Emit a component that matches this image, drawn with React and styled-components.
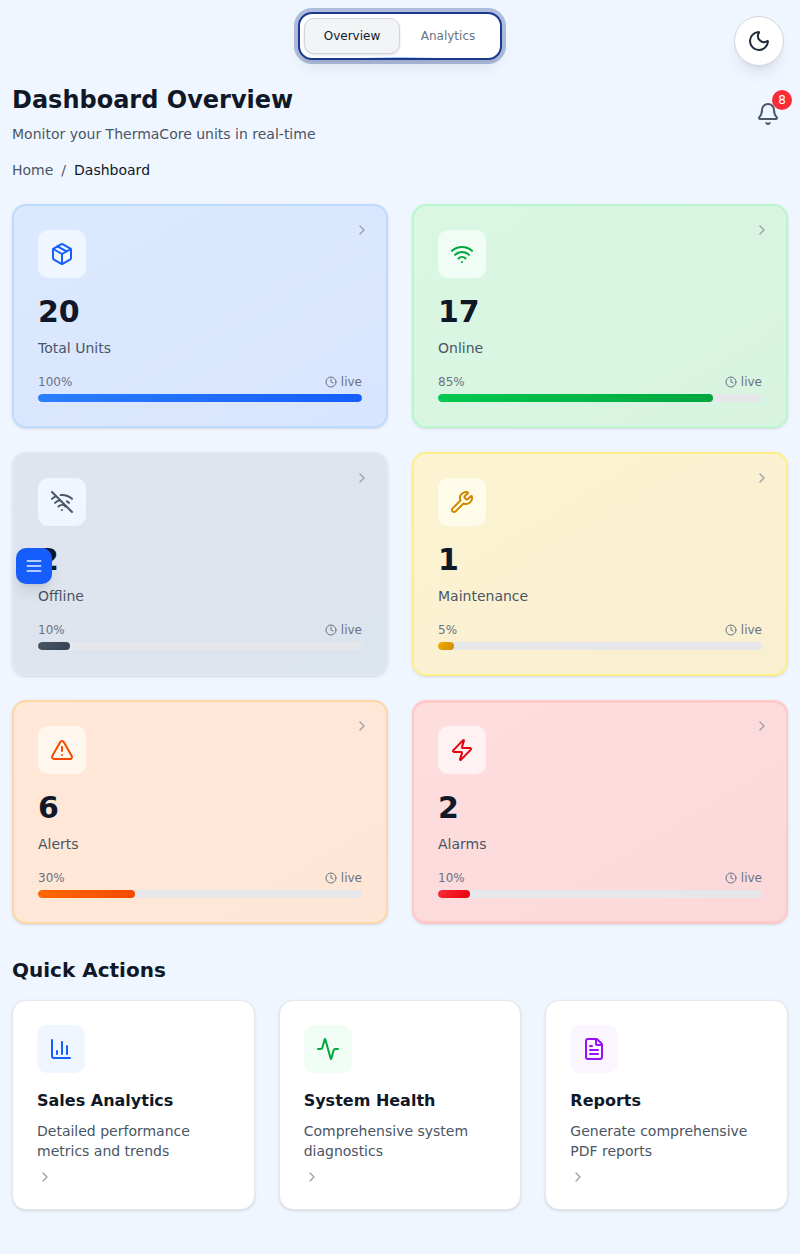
import React from "react";
import styled, { createGlobalStyle } from "styled-components";
import {
  Activity,
  Bell,
  ChartColumn,
  ChevronRight,
  Clock,
  FileText,
  Moon,
  Package,
  TriangleAlert,
  Wifi,
  WifiOff,
  Wrench,
  Zap,
} from "lucide-react";

const GlobalStyle = createGlobalStyle`
  *, *::before, *::after { box-sizing: border-box; }
  body {
    margin: 0;
    background: #eff6ff;
    color: #101828;
    font-family: "DejaVu Sans", sans-serif;
    font-size: 14px;
    line-height: 20px;
  }
  h1, h2, h3, p { margin: 0; }
  svg { display: block; flex: none; }
  button { font: inherit; padding: 0; border: 0; background: none; cursor: pointer; }
`;

const Page = styled.div`
  position: relative;
  min-height: 1254px;
  display: flex;
  flex-direction: column;
`;

const TopBar = styled.div`
  display: flex;
  justify-content: center;
  height: 84px;
  padding-top: 12px;
`;

const TabList = styled.div`
  position: relative;
  display: flex;
  height: 48px;
  padding: 4px;
  border: 2px solid #1c398e;
  border-radius: 14px;
  background: #fff;
  box-shadow: 0 0 0 4px rgba(28, 57, 142, 0.3), 0 10px 15px -3px rgba(0, 0, 0, 0.08),
    0 4px 6px -4px rgba(0, 0, 0, 0.08);

  &::after {
    content: "";
    position: absolute;
    bottom: 0;
    left: 30%;
    right: 30%;
    height: 1px;
    background: linear-gradient(to right, transparent, rgba(43, 127, 255, 0.5), transparent);
  }
`;

const Tab = styled.button`
  width: 96px;
  height: 36px;
  border: 1px solid ${(p) => (p.$active ? "#d1d5dc" : "transparent")};
  border-radius: 10px;
  background: ${(p) => (p.$active ? "#f3f4f6" : "transparent")};
  box-shadow: ${(p) =>
    p.$active ? "0 1px 3px rgba(0, 0, 0, 0.1), 0 1px 2px -1px rgba(0, 0, 0, 0.1)" : "none"};
  color: ${(p) => (p.$active ? "#101828" : "#6a7282")};
  font-size: 12px;
  line-height: 16px;
`;

const ThemeButton = styled.button`
  position: absolute;
  top: 16px;
  right: 16px;
  display: grid;
  place-items: center;
  width: 50px;
  height: 50px;
  border: 1px solid #d1d5dc;
  border-radius: 50%;
  background: #fff;
  color: #1e2939;
  box-shadow: 0 10px 15px -3px rgba(0, 0, 0, 0.08), 0 4px 6px -4px rgba(0, 0, 0, 0.08);
`;

const MenuButton = styled.button`
  position: absolute;
  top: 548px;
  left: 16px;
  display: grid;
  place-items: center;
  width: 36px;
  height: 36px;
  border-radius: 10px;
  background: #155dfc;
  color: rgba(255, 255, 255, 0.9);
  box-shadow: 0 10px 15px -3px rgba(0, 0, 0, 0.1), 0 4px 6px -4px rgba(0, 0, 0, 0.1);
`;

const Content = styled.main`
  display: flex;
  flex-direction: column;
  padding: 0 12px 44px;
`;

const Header = styled.header`
  display: flex;
  align-items: center;
  justify-content: space-between;
`;

const Title = styled.h1`
  margin-bottom: 8px;
  font-size: 24px;
  line-height: 32px;
  font-weight: 700;
`;

const Subtitle = styled.p`
  color: #4a5565;
`;

const BellButton = styled.button`
  position: relative;
  display: grid;
  place-items: center;
  width: 40px;
  height: 40px;
  color: #4a5565;
`;

const Badge = styled.span`
  position: absolute;
  top: -4px;
  right: -4px;
  display: grid;
  place-items: center;
  width: 20px;
  height: 20px;
  border-radius: 50%;
  background: #fb2c36;
  color: #fff;
  font-size: 12px;
  line-height: 16px;
`;

const Breadcrumb = styled.nav`
  display: flex;
  gap: 8px;
  margin: 16px 0 24px;
  color: #4a5565;
`;

const Current = styled.span`
  color: #101828;
`;

const StatGrid = styled.section`
  display: grid;
  grid-template-columns: repeat(2, 1fr);
  gap: 24px;
`;

const StatCard = styled.article`
  position: relative;
  height: 224px;
  padding: 24px;
  border: 2px solid ${(p) => p.$border};
  border-radius: 14px;
  background: linear-gradient(to bottom right, ${(p) => p.$from}, ${(p) => p.$to}) border-box;
  box-shadow: 0 1px 3px rgba(0, 0, 0, 0.1), 0 1px 2px -1px rgba(0, 0, 0, 0.1)
    ${(p) => (p.$urgent ? `, inset 0 1px ${p.$border}, inset 0 -1px ${p.$border}` : "")};
`;

const CardArrow = styled.span`
  position: absolute;
  top: 16px;
  right: 16px;
  color: #99a1af;
`;

const IconTile = styled.div`
  display: grid;
  place-items: center;
  width: 48px;
  height: 48px;
  margin-bottom: 16px;
  border-radius: 10px;
  background: ${(p) => p.$bg};
  color: ${(p) => p.$color};
`;

const Value = styled.p`
  margin-bottom: 8px;
  font-size: 30px;
  line-height: 36px;
  font-weight: 700;
`;

const Label = styled.p`
  margin-bottom: 16px;
  color: #4a5565;
`;

const Meta = styled.div`
  display: flex;
  justify-content: space-between;
  margin-bottom: 4px;
  color: #6a7282;
  font-size: 12px;
  line-height: 16px;
`;

const Live = styled.span`
  display: flex;
  align-items: center;
  gap: 4px;
`;

const Track = styled.div`
  height: 8px;
  border-radius: 4px;
  background: #e5e7eb;
  overflow: hidden;
`;

const Fill = styled.div`
  height: 100%;
  border-radius: 4px;
  background: linear-gradient(135deg, ${(p) => p.$from}, ${(p) => p.$to});
`;

const SectionTitle = styled.h2`
  margin: 32px 0 16px;
  font-size: 20px;
  line-height: 28px;
  font-weight: 700;
`;

const ActionGrid = styled.section`
  display: grid;
  grid-template-columns: repeat(3, 1fr);
  gap: 24px;
`;

const ActionCard = styled.article`
  padding: 24px;
  border: 1px solid #e5e7eb;
  border-radius: 14px;
  background: #fff;
  box-shadow: 0 1px 3px rgba(0, 0, 0, 0.1), 0 1px 2px -1px rgba(0, 0, 0, 0.1);
`;

const ActionTitle = styled.h3`
  margin-bottom: 8px;
  font-size: 16px;
  line-height: 24px;
  font-weight: 600;
`;

const ActionText = styled.p`
  margin-bottom: 8px;
  color: #4a5565;
`;

const ActionArrow = styled.span`
  display: block;
  color: #99a1af;
`;

const MenuIcon = () => (
  <svg width="20" height="20" viewBox="0 0 24 24" fill="none" stroke="currentColor"
    strokeWidth="2" strokeLinecap="round">
    <path d="M4 6h16M4 12h16M4 18h16" />
  </svg>
);

const stats = [
  { label: "Total Units", value: 20, percent: 100, Icon: Package, color: "#155dfc", tile: "#eff6ff",
    border: "#bedbff", from: "#dbe9fe", to: "#d8e5fe", bar: ["#2b7fff", "#155dfc"] },
  { label: "Online", value: 17, percent: 85, Icon: Wifi, color: "#00a63e", tile: "#f0fdf4",
    border: "#b9f8cf", from: "#daf7e4", to: "#d8f4e1", bar: ["#00c950", "#00a63e"] },
  { label: "Offline", value: 2, percent: 10, Icon: WifiOff, color: "#4a5565", tile: "#eff6ff",
    border: "#e5e7eb", from: "#dfe5ee", to: "#dce4ed", bar: ["#4a5565", "#364153"] },
  { label: "Maintenance", value: 1, percent: 5, Icon: Wrench, color: "#d08700", tile: "#fefce8",
    border: "#fff085", from: "#fcf3d2", to: "#f9efd1", bar: ["#f0b100", "#d08700"] },
  { label: "Alerts", value: 6, percent: 30, Icon: TriangleAlert, color: "#f54900", tile: "#fff7ed",
    border: "#ffd6a7", from: "#ffe8d8", to: "#fee6d6", bar: ["#ff6900", "#f54900"] },
  { label: "Alarms", value: 2, percent: 10, Icon: Zap, color: "#e7000b", tile: "#fef2f2",
    border: "#ffc9c9", from: "#fedddf", to: "#fbd9db", bar: ["#fb2c36", "#e7000b"], urgent: true },
];

const actions = [
  { title: "Sales Analytics", text: "Detailed performance metrics and trends",
    Icon: ChartColumn, color: "#155dfc", tile: "#eff6ff" },
  { title: "System Health", text: "Comprehensive system diagnostics",
    Icon: Activity, color: "#00a63e", tile: "#f0fdf4" },
  { title: "Reports", text: "Generate comprehensive PDF reports",
    Icon: FileText, color: "#9810fa", tile: "#faf5ff" },
];

export default function App() {
  return (
    <Page>
      <GlobalStyle />
      <TopBar>
        <TabList>
          <Tab $active>Overview</Tab>
          <Tab>Analytics</Tab>
        </TabList>
      </TopBar>
      <Content>
        <Header>
          <div>
            <Title>Dashboard Overview</Title>
            <Subtitle>Monitor your ThermaCore units in real-time</Subtitle>
          </div>
          <BellButton aria-label="Notifications">
            <Bell size={24} />
            <Badge>8</Badge>
          </BellButton>
        </Header>
        <Breadcrumb>
          <span>Home</span>
          <span>/</span>
          <Current>Dashboard</Current>
        </Breadcrumb>
        <StatGrid>
          {stats.map(({ label, value, percent, Icon, color, tile, border, from, to, bar, urgent }) => (
            <StatCard key={label} $border={border} $from={from} $to={to} $urgent={urgent}>
              <CardArrow><ChevronRight size={16} /></CardArrow>
              <IconTile $bg={tile} $color={color}><Icon size={24} /></IconTile>
              <Value>{value}</Value>
              <Label>{label}</Label>
              <Meta>
                <span>{percent}%</span>
                <Live><Clock size={12} />live</Live>
              </Meta>
              <Track>
                <Fill $from={bar[0]} $to={bar[1]} style={{ width: `${percent}%` }} />
              </Track>
            </StatCard>
          ))}
        </StatGrid>
        <SectionTitle>Quick Actions</SectionTitle>
        <ActionGrid>
          {actions.map(({ title, text, Icon, color, tile }) => (
            <ActionCard key={title}>
              <IconTile $bg={tile} $color={color}><Icon size={24} /></IconTile>
              <ActionTitle>{title}</ActionTitle>
              <ActionText>{text}</ActionText>
              <ActionArrow><ChevronRight size={16} /></ActionArrow>
            </ActionCard>
          ))}
        </ActionGrid>
      </Content>
      <ThemeButton aria-label="Toggle theme"><Moon size={24} /></ThemeButton>
      <MenuButton aria-label="Open menu"><MenuIcon /></MenuButton>
    </Page>
  );
}
